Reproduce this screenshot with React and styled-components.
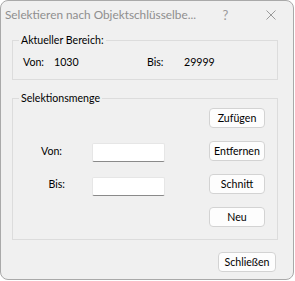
import React from "react";
import styled, { createGlobalStyle } from "styled-components";

const Global = createGlobalStyle`
  html, body { margin: 0; padding: 0; background: #ffffff; }
  body { font-family: Lato, "Noto Sans", "Liberation Sans", sans-serif; font-size: 10.6px; color: #000; }
`;

const Window = styled.div`
  box-sizing: border-box;
  width: 294px;
  height: 280px;
  border: 1px solid #a9a9a9;
  border-radius: 8px;
  background: #f0f0f0;
  display: flex;
  flex-direction: column;
  overflow: hidden;
`;

const TitleBar = styled.div`
  box-sizing: border-box;
  height: 31px;
  display: flex;
  align-items: center;
  padding: 0 0 4px 4px;
  color: #8e8e8e;
  font-size: 11.8px;
`;

const TitleText = styled.div`
  flex: 1;
  min-width: 0;
  overflow: hidden;
  white-space: nowrap;
`;

const TitleButton = styled.div`
  width: 45px;
  flex: none;
  display: flex;
  align-items: center;
  justify-content: center;
  color: #9a9a9a;
  font-size: 13px;
`;

const Body = styled.div`
  padding: 0 15px 0 11px;
  display: flex;
  flex-direction: column;
`;

const Group = styled.fieldset`
  margin: 0 0 ${(p) => p.$mb || 0}px 0;
  padding: 0;
  border: 1px solid #dcdcdc;
  border-radius: 0;
  min-width: 0;
`;

const Legend = styled.legend`
  margin-left: 6px;
  padding: 0 2px;
  line-height: 16px;
`;

const CurrentRow = styled.div`
  display: grid;
  grid-template-columns: 31px 93px 37px auto;
  padding: 6px 0 9px 10px;
  line-height: 16px;
`;

const SelectionGrid = styled.div`
  display: grid;
  grid-template-columns: 79px 73px 1fr 56px;
  grid-auto-rows: 20px;
  row-gap: 13px;
  padding: 2px 12px 12px 0;
  align-items: center;
`;

const FieldLabel = styled.label`
  grid-column: 1;
  text-align: right;
  padding-right: ${(p) => p.$pr}px;
`;

const TextInput = styled.input`
  grid-column: 2;
  box-sizing: border-box;
  width: 73px;
  height: 19px;
  margin-top: ${(p) => p.$mt || 0}px;
  border: 1px solid #e6e6e6;
  border-bottom: 1px solid #8a8a8a;
  border-radius: 2px;
  background: #ffffff;
  padding: 0 3px;
  font: inherit;
  outline: none;
`;

const Button = styled.button`
  box-sizing: border-box;
  width: ${(p) => p.$w || 56}px;
  height: 20px;
  padding: 0;
  border: 1px solid #d3d3d3;
  border-radius: 4px;
  background: #fdfdfd;
  font-family: inherit;
  font-size: 10.6px;
  color: #000;
  grid-column: 4;
  grid-row: ${(p) => p.$row};
`;

const Footer = styled.div`
  display: flex;
  justify-content: flex-end;
  padding: 12px 2px 0 0;
`;

const CloseIcon = () => (
  <svg width="10" height="10" viewBox="0 0 10 10">
    <path d="M0.5 0.5 L9.5 9.5 M9.5 0.5 L0.5 9.5" stroke="#9a9a9a" strokeWidth="1" fill="none" />
  </svg>
);

export default function App() {
  return (
    <>
      <Global />
      <Window>
        <TitleBar>
          <TitleText>Selektieren nach Objektschlüsselbe...</TitleText>
          <TitleButton>?</TitleButton>
          <TitleButton>
            <CloseIcon />
          </TitleButton>
        </TitleBar>
        <Body>
          <Group $mb={10}>
            <Legend>Aktueller Bereich:</Legend>
            <CurrentRow>
              <span>Von:</span>
              <span>1030</span>
              <span>Bis:</span>
              <span>29999</span>
            </CurrentRow>
          </Group>
          <Group>
            <Legend>Selektionsmenge</Legend>
            <SelectionGrid>
              <Button $row={1}>Zufügen</Button>
              <FieldLabel $pr={30} style={{ gridRow: 2 }}>Von:</FieldLabel>
              <TextInput $mt={2} style={{ gridRow: 2 }} />
              <Button $row={2}>Entfernen</Button>
              <FieldLabel $pr={27} style={{ gridRow: 3 }}>Bis:</FieldLabel>
              <TextInput $mt={4} style={{ gridRow: 3 }} />
              <Button $row={3}>Schnitt</Button>
              <Button $row={4}>Neu</Button>
            </SelectionGrid>
          </Group>
          <Footer>
            <Button $w={58}>Schließen</Button>
          </Footer>
        </Body>
      </Window>
    </>
  );
}
